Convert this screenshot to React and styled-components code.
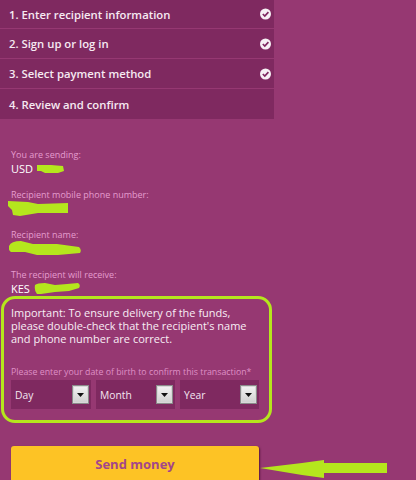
import React from 'react';
import styled, { createGlobalStyle } from 'styled-components';

const GlobalStyle = createGlobalStyle`
    html, body {
        margin: 0;
        height: 480px;
        overflow: hidden;
        background: #963872;
    }
`;

const Page = styled.div`
    width: 416px;
    height: 480px;
    overflow: hidden;
    font-family: 'Open Sans', 'Noto Sans', sans-serif;
    color: #fff;
`;

const Steps = styled.ol`
    list-style: none;
    margin: 0;
    padding: 0;
    width: 274px;
    background: #7f2960;
`;

const Step = styled.li`
    display: flex;
    align-items: center;
    justify-content: space-between;
    box-sizing: border-box;
    height: ${p => p.$height}px;
    padding: 0 1px 0 9px;
    font-size: 11.3px;
    font-weight: 600;
    border-bottom: ${p => (p.$last ? 'none' : '1px solid #963872')};
    color: #f6eaf2;
`;

const Summary = styled.div`
    padding: 29px 0 0 11px;
`;

const Field = styled.div`
    height: ${p => p.$height}px;
`;

const Label = styled.div`
    font-size: 9px;
    line-height: 13px;
    color: #e59ccf;
`;

const Value = styled.div`
    display: flex;
    align-items: center;
    gap: 4px;
    height: 15px;
    font-size: 11px;
    color: #fff;
`;

const Scribble = styled.svg`
    display: block;
    flex: none;
    margin-left: ${p => p.$shift || 0}px;
`;

const Notice = styled.section`
    box-sizing: border-box;
    width: 271px;
    height: 127px;
    margin: 0 0 0 1px;
    padding: 7px 7px 0 7px;
    border: 3px solid #b5e61d;
    border-radius: 14px;
`;

const NoticeText = styled.p`
    margin: 0;
    font-size: 11px;
    line-height: 13px;
    color: #f8eef5;
`;

const DobLabel = styled.div`
    margin-top: 21px;
    font-size: 8.8px;
    line-height: 12px;
    color: #df8fc6;
    white-space: nowrap;
`;

const DateRow = styled.div`
    display: flex;
    gap: 5px;
    margin-top: 2px;
`;

const Select = styled.div`
    display: flex;
    align-items: center;
    justify-content: space-between;
    box-sizing: border-box;
    width: ${p => p.$width}px;
    height: 29px;
    padding: 0 2px 0 4px;
    background: #7f2960;
    font-size: 10.3px;
    color: #f4e6f0;
`;

const ArrowButton = styled.span`
    display: flex;
    align-items: center;
    justify-content: center;
    box-sizing: border-box;
    width: 17px;
    height: 19px;
    border: 1px solid #8a8a8a;
    outline: 1px solid #d8d8d8;
    outline-offset: -2px;
    background: linear-gradient(#f4f4f4, #cfcfcf);
`;

const SendRow = styled.div`
    display: flex;
    align-items: flex-start;
    margin: 23px 0 0 11px;
`;

const SendButton = styled.button`
    width: 248px;
    height: 50px;
    padding: 0 0 14px;
    border: none;
    border-radius: 3px;
    background: #fdc325;
    box-shadow: 1px 1px 2px rgba(60, 10, 40, 0.7);
    font-family: inherit;
    font-size: 13px;
    font-weight: 700;
    color: #a3468a;
`;

const Arrow = styled.svg`
    display: block;
    flex: none;
    margin: 14px 0 0 1px;
`;

const steps = [
    { text: '1. Enter recipient information', done: true, height: 29 },
    { text: '2. Sign up or log in', done: true, height: 30 },
    { text: '3. Select payment method', done: true, height: 30 },
    { text: '4. Review and confirm', done: false, height: 30 },
];

const Check = () => (
    <svg width="14" height="14" viewBox="0 0 14 14">
        <circle cx="6.5" cy="7" r="5.5" fill="#f7f2f5" />
        <path d="M3.8 7l2 2 3.6-3.8" fill="none" stroke="#7f2960" strokeWidth="1.7" />
    </svg>
);

const DropArrow = () => (
    <ArrowButton>
        <svg width="7" height="4" viewBox="0 0 7 4">
            <path d="M0 0h7L3.5 4z" fill="#111" />
        </svg>
    </ArrowButton>
);

const App = () => (
    <Page>
        <GlobalStyle />
        <Steps>
            {steps.map((s, i) => (
                <Step key={s.text} $height={s.height} $last={i === steps.length - 1}>
                    {s.text}
                    {s.done && <Check />}
                </Step>
            ))}
        </Steps>
        <Summary>
            <Field $height={40}>
                <Label>You are sending:</Label>
                <Value>
                    USD
                    <Scribble width="27" height="9" viewBox="0 0 27 9">
                        <path d="M0 1h14l12 1 1 5-6 2H8L4 7H0z" fill="#b5e61d" />
                    </Scribble>
                </Value>
            </Field>
            <Field $height={40}>
                <Label>Recipient mobile phone number:</Label>
                <Scribble width="60" height="15" viewBox="0 0 60 15" $shift={-3}>
                    <path d="M0 0l20 1 10 2 30-1v10H30l-18 3-7-1-1-5-4-4z" fill="#b5e61d" />
                </Scribble>
            </Field>
            <Field $height={40}>
                <Label>Recipient name:</Label>
                <Scribble width="72" height="15" viewBox="0 0 72 15" $shift={-2}>
                    <path d="M0 5q2-5 12-5l12 3h24l22 3q3 3 1 6l-22 2H28l-12-3H2q-3-2-2-6z" fill="#b5e61d" />
                </Scribble>
            </Field>
            <Label>The recipient will receive:</Label>
            <Value>
                KES
                <Scribble width="46" height="11" viewBox="0 0 46 11">
                    <path d="M1 2q2-2 10-2l10 2 12-1 11-1q3 2 1 5l-10 3-14 1-14 2H3Q0 8 1 2z" fill="#b5e61d" />
                </Scribble>
            </Value>
        </Summary>
        <Notice>
            <NoticeText>
                Important: To ensure delivery of the funds,
                <br />
                please double-check that the recipient's name
                <br />
                and phone number are correct.
            </NoticeText>
            <DobLabel>Please enter your date of birth to confirm this transaction*</DobLabel>
            <DateRow>
                <Select $width={80}>Day<DropArrow /></Select>
                <Select $width={79}>Month<DropArrow /></Select>
                <Select $width={79}>Year<DropArrow /></Select>
            </DateRow>
        </Notice>
        <SendRow>
            <SendButton>Send money</SendButton>
            <Arrow width="128" height="18" viewBox="0 0 128 18">
                <path d="M0 8l42-5 22-3v3h63v10H64v5l-22-3z" fill="#b5e61d" />
            </Arrow>
        </SendRow>
    </Page>
);

export default App;
